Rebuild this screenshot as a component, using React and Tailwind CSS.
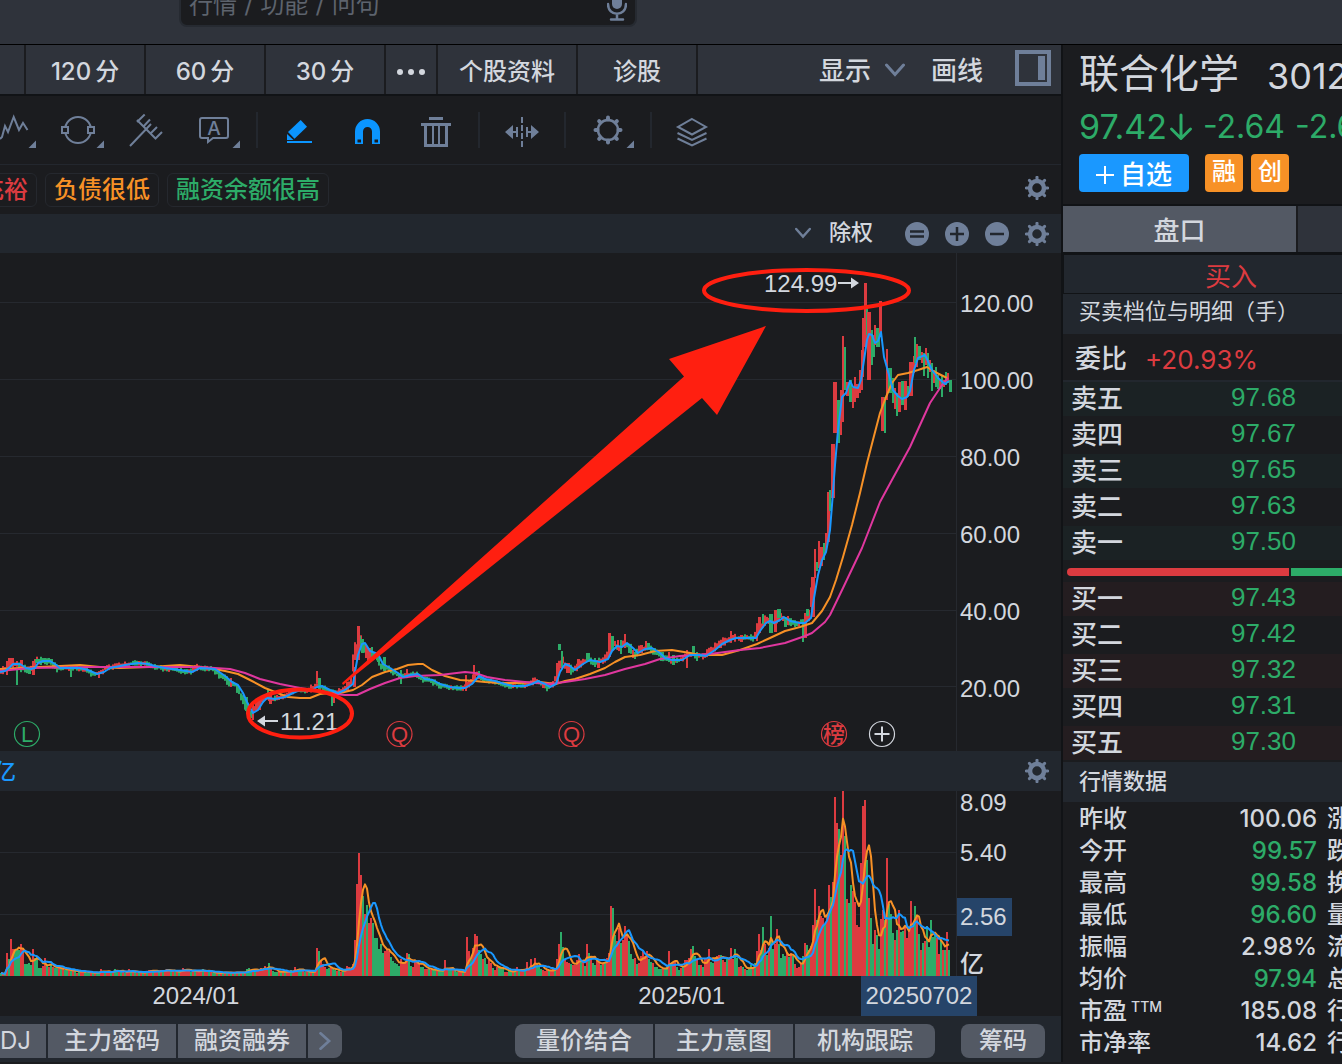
const RED = "#dc3b40";
const GREEN = "#2dab68";
const ORANGE = "#f79126";
const BLUE = "#1a98ff";
const PINK = "#e0379f";
const ICON = "#6f7f99";
const GRID = "#26292f";
const MARK = "#ff1f10";

// moving averages, "x,y" pairs in chart pixels
const MA_FAST = "0,672 5,671 10,667 13,664 20,664 26,668 31,669 35,668 38,663 43,661 50,661 55,664 60,668 80,668 88,670 97,674 104,672 110,668 125,665 138,663 148,664 155,666 165,668 180,670 192,672 200,668 215,669 225,676 232,682 238,685 243,693 247,702 253,713 258,710 263,702 267,698 275,699 285,697 293,693 300,690 310,691 317,687 322,686 330,690 338,693 345,690 353,684 355,672 358,655 362,644 365,643 370,651 378,654 383,664 390,668 398,673 403,677 410,675 418,674 425,679 433,680 440,684 450,687 460,688 465,688 472,684 479,676 485,679 495,681 505,684 512,686 525,686 532,684 538,681 545,684 550,687 556,684 560,672 565,664 570,666 575,670 583,664 590,660 600,662 608,659 612,651 617,646 622,647 627,643 633,648 638,653 645,649 652,648 660,653 665,658 672,660 682,660 690,655 700,655 706,656 715,650 722,644 730,640 736,638 750,638 756,638 760,631 766,623 770,621 774,623 780,620 784,617 790,621 800,623 805,623 811,618 814,598 818,575 822,560 826,552 830,530 832,505 835,465 838,430 842,397 846,393 850,381 853,387 858,388 861,380 864,360 867,340 869,334 872,335 875,343 878,341 881,332 884,357 889,375 893,390 898,396 902,399 907,397 910,391 914,370 918,358 925,355 932,370 938,378 945,384 949,381";
const MA_MID = "0,669 40,667 80,665 100,667 120,668 150,667 180,665 200,667 215,669 225,671 238,674 250,680 265,688 275,692 288,697 300,698 310,698 320,694 330,693 340,693 353,690 362,685 372,677 385,672 397,669 408,665 418,664 423,664 432,670 445,676 460,680 475,681 485,682 500,683 520,683 540,682 556,684 565,681 575,679 590,674 605,668 615,662 625,657 640,655 655,651 672,650 690,653 700,655 722,655 740,650 757,644 770,638 785,631 800,627 812,623 822,611 830,597 836,580 843,557 852,525 860,493 867,463 874,436 880,413 886,397 892,383 898,375 908,373 918,370 927,367 935,372 947,378";
const MA_SLOW = "0,671 30,668 90,667 150,667 200,667 230,669 245,673 260,679 280,684 300,688 320,691 335,694 345,695 357,695 370,689 385,683 400,678 415,676 440,675 465,672 475,673 487,677 505,680 525,682 550,684 565,682 585,679 605,675 625,669 645,664 660,659 680,656 710,654 740,650 760,648 785,643 805,636 812,633 825,622 830,615 843,588 862,548 880,502 893,478 910,447 930,403 942,385 948,378";

// [x, high, low, up?, width]
const BIG_CANDLES = [
  [6, 661, 675, 1, 2], [8, 658, 664, 1, 6], [16, 668, 685, 0, 2], [20, 660, 667, 1, 3], [28, 669, 674, 0, 3], [32, 661, 675, 1, 3],
  [35, 659, 663, 0, 18], [70, 667, 677, 0, 2], [98, 673, 678, 1, 2], [230, 678, 687, 1, 2], [245, 697, 711, 0, 3], [252, 705, 720, 1, 2],
  [255, 699, 710, 1, 6], [267, 690, 699, 0, 2], [269, 693, 704, 1, 3], [316, 671, 683, 1, 2], [318, 678, 690, 0, 3], [331, 693, 706, 0, 2],
  [333, 694, 703, 1, 2], [346, 682, 692, 1, 3], [353, 667, 687, 1, 3], [355, 647, 660, 1, 2], [357, 626, 660, 1, 3], [360, 636, 648, 0, 1],
  [361, 639, 653, 0, 3], [365, 645, 658, 1, 2], [367, 648, 661, 1, 4], [371, 647, 657, 0, 2], [377, 653, 662, 0, 3], [383, 657, 671, 0, 3],
  [400, 670, 684, 0, 2], [406, 669, 677, 1, 2], [465, 675, 691, 1, 2], [473, 665, 680, 1, 2], [478, 671, 678, 0, 2], [542, 684, 688, 1, 3],
  [556, 663, 683, 1, 3], [558, 644, 650, 0, 3], [561, 651, 667, 0, 2], [566, 663, 673, 1, 4], [577, 659, 668, 1, 3], [586, 653, 662, 0, 4],
  [594, 658, 667, 0, 2], [597, 660, 668, 1, 3], [608, 633, 657, 1, 3], [611, 636, 650, 0, 3], [617, 640, 650, 1, 2], [620, 640, 654, 0, 2],
  [624, 634, 648, 1, 2], [628, 644, 653, 0, 4], [632, 650, 658, 1, 2], [640, 645, 653, 1, 3], [645, 641, 650, 1, 2], [647, 643, 650, 0, 3],
  [660, 652, 661, 0, 4], [668, 652, 659, 1, 2], [672, 655, 665, 0, 3], [686, 657, 668, 1, 2], [692, 646, 653, 0, 3], [696, 652, 661, 0, 2],
  [719, 641, 648, 1, 3], [730, 631, 640, 1, 2], [740, 635, 642, 1, 3], [756, 629, 641, 1, 2], [758, 617, 633, 1, 3], [762, 614, 624, 0, 2],
  [769, 614, 633, 0, 4], [774, 610, 632, 1, 3], [777, 609, 618, 0, 4], [784, 617, 627, 0, 3], [787, 616, 625, 1, 2], [802, 620, 642, 0, 2],
  [804, 613, 638, 1, 3], [806, 609, 616, 0, 3], [811, 577, 617, 1, 4], [814, 549, 578, 1, 2], [816, 562, 571, 0, 2], [818, 541, 568, 1, 2],
  [820, 547, 566, 1, 3], [823, 543, 560, 0, 2], [825, 533, 552, 1, 2], [827, 492, 542, 1, 3], [829, 490, 511, 0, 2], [831, 444, 498, 1, 4],
  [833, 382, 433, 1, 4], [837, 400, 443, 0, 3], [840, 390, 435, 1, 2], [842, 336, 422, 1, 2], [844, 347, 390, 0, 2], [846, 382, 396, 1, 3],
  [849, 380, 402, 0, 3], [852, 388, 408, 1, 2], [854, 377, 402, 1, 2], [856, 384, 398, 1, 3], [859, 370, 393, 1, 2], [861, 350, 390, 1, 2],
  [862, 318, 377, 1, 2], [864, 283, 347, 1, 3], [866, 308, 335, 0, 2], [867, 312, 380, 1, 4], [871, 330, 365, 0, 2], [873, 335, 357, 0, 2],
  [874, 325, 345, 1, 2], [876, 328, 347, 0, 4], [879, 301, 333, 1, 3], [881, 397, 431, 1, 3], [884, 397, 433, 0, 2], [886, 349, 400, 1, 2],
  [888, 368, 393, 0, 4], [892, 378, 403, 0, 2], [894, 388, 409, 1, 2], [896, 393, 416, 0, 2], [898, 382, 412, 1, 3], [901, 381, 405, 0, 3],
  [904, 381, 410, 1, 3], [907, 386, 397, 0, 2], [909, 362, 396, 1, 4], [913, 356, 373, 1, 2], [914, 337, 363, 0, 2], [916, 344, 367, 1, 2],
  [918, 346, 360, 0, 3], [921, 352, 363, 1, 2], [923, 353, 376, 0, 2], [925, 348, 365, 1, 2], [927, 353, 378, 0, 2], [929, 360, 372, 1, 2],
  [931, 363, 391, 0, 2], [933, 370, 383, 1, 2], [935, 367, 387, 0, 2], [937, 375, 389, 0, 2], [939, 380, 389, 1, 2], [941, 375, 397, 0, 2],
  [943, 380, 387, 1, 2], [945, 372, 385, 0, 2], [947, 373, 383, 1, 2], [949, 380, 392, 0, 3],
];

// daily volume, one bar every 2px; negative = down day
const VOLUME = [
  -3, 2, -2, 23, -17, 37, 27, -26, -26, -26, 32, 27, -12, -12, -13, -11, 27, -18, -20, -8, -8, 10, 18, -10, 9,
  -11, 9, -8, -8, 8, -7, 7, -6, -6, 6, -5, 6, -5, 3, -5, 4, 5, -4, -3, -4, 3, -3, 3, -3, -4,
  7, 5, -4, 3, 5, -4, 4, -7, -6, 4, -4, 5, -3, 4, 7, -4, 5, -4, 3, -4, 3, -3, 4, -5, 6,
  6, -5, 4, 5, -4, 6, -6, 5, 7, 6, -5, 5, -4, 4, -5, 5, 8, 7, 6, 5, -4, 5, -6, 5, 4,
  5, -7, 5, 4, -5, 4, -3, -3, 3, -3, 3, -4, 4, -3, 3, -3, 3, -4, 4, -3, 3, -4, 4, -7, -8,
  -6, 6, -5, 7, 6, 8, 7, 10, 6, -13, 7, -5, -4, -4, 4, -4, 5, -4, 4, 4, -6, 4, 9, 6, -7,
  -6, 5, -4, 4, -4, 4, -4, 5, 28, -25, 15, 12, 9, -7, -8, 8, -7, -6, 5, -6, 4, -5, 6, 10, 9,
  8, 12, 36, 92, 123, 101, -80, 62, -71, 53, 58, -53, -38, -38, -27, -32, -23, 25, 27, 25, -19, -15, -13, -12, -10,
  17, 13, 14, 23, -22, -10, 9, 15, 15, 13, -9, -9, 7, 7, -7, 6, -6, -6, 5, -5, -5, -5, 16, 6, -6,
  -6, 6, -5, -4, 4, 4, -4, 4, 39, 25, -18, 28, 42, 40, -26, -22, 17, -18, -12, 16, 13, -8, 6, 9, -9,
  -9, -7, 4, 4, -5, -5, 5, -5, 9, -6, 5, 5, -6, 14, 6, 17, 8, 18, -11, -9, -7, 6, 5, 6, -5,
  5, 7, -7, 17, 32, -44, -29, 16, 14, 13, -12, 11, 11, 16, 22, -14, 14, -10, 32, -23, 17, -13, -11, 15, 14,
  -11, 13, -14, 18, 23, 70, -68, -41, 35, 48, -33, 36, 50, 42, -35, -22, -17, 18, -12, 13, 20, 25, 20, 25, -17,
  -14, 13, -9, -9, -7, -7, 7, -8, -9, 25, -13, 14, 14, -9, -6, 8, -10, 16, 16, 18, 27, -30, -20, 17, -11,
  11, -9, 17, 18, 27, -14, -13, 17, 20, 21, -21, 16, 14, -18, 18, 28, 17, -27, -18, 9, 10, -9, 7, -6, -7,
  -11, 9, -13, 25, 42, -26, -49, 32, -21, 28, -60, -27, 32, 47, -32, -18, -22, -20, 24, -19, 23, -20, 12, 8, 9,
  13, -20, 33, -31, -26, 30, 51, 87, -56, 70, 60, 58, -52, 62, 91, -79, 94, 179, 153, -147, 121, 186, -140, 77, -73,
  -91, 85, 74, 51, 49, 113, 170, 176, -116, 78, -58, -32, 46, -41, -27, 57, 66, -56, 118, -72, -62, -43, 36, -46, 66,
  -44, -45, 50, 38, 48, 75, 50, -70, 60, -42, 26, -33, 35, -50, -29, -56, -39, -43, 38, 22, -36, 26, -26, 44, -26,
];

const FAST_POINTS = MA_FAST.split(" ").map(p => p.split(",").map(Number));

function priceAt(x) {
  const i = FAST_POINTS.findIndex(p => p[0] >= x);
  if (i <= 0) return FAST_POINTS[0][1];
  const [x0, y0] = FAST_POINTS[i - 1];
  const [x1, y1] = FAST_POINTS[i];
  return y0 + ((y1 - y0) * (x - x0)) / (x1 - x0);
}

const wobble = (n) => Math.abs((Math.sin(n * 12.9898) * 43758.5453) % 1);

const SMALL_CANDLES = Array.from({ length: 406 }, (_, i) => {
  const x = i * 2;
  const slope = priceAt(x + 4) - priceAt(x);
  const mid = priceAt(x + 3) + slope * 0.4;
  const size = (x > 560 || x < 50 ? 3 : 2) + Math.abs(slope) * 0.5;
  const up = slope + (wobble(i + 7) - 0.5) * 3 < 0;
  return [x, mid - 1 - wobble(i) * size, mid + 1 + wobble(i + 99) * size, up, 2];
});

function average(days) {
  return VOLUME.map((_, i) => {
    const part = VOLUME.slice(Math.max(0, i - days + 1), i + 1);
    const mean = part.reduce((sum, v) => sum + Math.abs(v), 0) / part.length;
    return `${i * 2 + 1},${185 - mean}`;
  }).join(" ");
}

function Chevron({ className = "", size = 20 }) {
  return (
    <svg width={size} height={size} viewBox="0 0 20 20" className={className} fill="none" stroke={ICON} strokeWidth="3" strokeLinecap="round">
      <path d="M1.5 5 10 14.5 18.5 5" />
    </svg>
  );
}

function Gear() {
  return (
    <svg width="24" height="24" viewBox="-12 -12 24 24" fill="none" stroke={ICON}>
      <circle r="7" strokeWidth="4.5" />
      {[0, 45, 90, 135, 180, 225, 270, 315].map(a => (
        <path key={a} d="M0-8V-10.8" strokeWidth="3" strokeLinecap="round" transform={`rotate(${a})`} />
      ))}
    </svg>
  );
}

function RoundIcon({ d }) {
  return (
    <svg width="24" height="24" viewBox="0 0 24 24">
      <circle cx="12" cy="12" r="12" fill={ICON} />
      <path d={d} stroke="#22272e" strokeWidth="2.5" />
    </svg>
  );
}

function Tool({ label, more, children }) {
  return (
    <button aria-label={label} className="w-[68px] shrink-0">
      <svg width="68" height="68" viewBox="0 0 68 68" fill="none" stroke={ICON} strokeWidth="2">
        {children}
        {more && <path d="M60 44.5V52H52.5Z" fill={ICON} stroke="none" />}
      </svg>
    </button>
  );
}

const Divider = () => <div className="mx-2 h-9 w-0.5 shrink-0 bg-[#23272e]" />;

function Toolbar() {
  return (
    <div className="-ml-6 flex h-[68px] items-center">
      <Tool label="波浪" more>
        <path d="M24 43 26 41 29 30 32 36 37.700 21 43 34 47 27 51.500 34" />
      </Tool>
      <Tool label="图形" more>
        <circle cx="34" cy="34" r="13" />
        <rect x="18" y="31" width="6" height="6" fill="#1b1c1f" />
        <rect x="44" y="31" width="6" height="6" fill="#1b1c1f" />
      </Tool>
      <Tool label="叉线">
        <path d="M18 50 39 28M25 24 44 43M25 26 32.700 18.500M31 31 38 23.500M38 38 45 31M43 43 50 36" />
      </Tool>
      <Tool label="标注" more>
        <path d="M22 22H46a2 2 0 0 1 2 2V40a2 2 0 0 1-2 2H33L28 46V42H22a2 2 0 0 1-2-2V24a2 2 0 0 1 2-2Z" />
        <text x="34" y="39" textAnchor="middle" fill={ICON} stroke="none" className="font-[Inter] text-[19px] font-medium">A</text>
      </Tool>
      <Divider />
      <Tool label="画笔">
        <g fill="#0b95ff" stroke="none">
          <path d="M34.700 24 41 30.700 28.500 42.700 22 36Z" />
          <path d="M21 38 27.500 44H21ZM21 45H46V47H21Z" />
        </g>
      </Tool>
      <Tool label="磁吸">
        <path d="M21 48V35.500a12.500 12.500 0 0 1 25 0V48H38V35.500a4.500 4.500 0 0 0-9 0V48ZM23.500 43.500V46.500H27V43.500ZM40.500 43.500V46.500H44V43.500Z" fill="#0b95ff" fillRule="evenodd" stroke="none" />
      </Tool>
      <Tool label="删除">
        <path d="M27 22.500H41M19 28.500H49" strokeWidth="3" />
        <path d="M23.500 29V49.500H44.500V29" strokeWidth="3" />
        <path d="M31 29V49M37 29V49" />
      </Tool>
      <Divider />
      <Tool label="区间">
        <path d="M34 21V51" strokeDasharray="6 2" />
        <path d="M24 36H29M29 31V41M44 36H39M39 31V41" />
        <path d="M17 36 25 29V43ZM51 36 43 29V43Z" fill={ICON} stroke="none" />
      </Tool>
      <Divider />
      <Tool label="设置" more>
        <circle cx="34" cy="34" r="10" strokeWidth="2.500" />
        {[0, 45, 90, 135, 180, 225, 270, 315].map(a => (
          <path key={a} d="M34 23.500V21.500" strokeWidth="4" strokeLinecap="round" transform={`rotate(${a} 34 34)`} />
        ))}
      </Tool>
      <Divider />
      <Tool label="图层">
        <path d="M32 23 46 31 32 38.500 18 31ZM17.500 37 32 44 46.500 37M17.500 42.500 32 49.500 46.500 42.500" />
      </Tool>
    </div>
  );
}

function EventMark({ x, color, children }) {
  return (
    <g>
      <circle cx={x} cy="734" r="12.500" fill="none" stroke={color} strokeWidth="1.200" />
      <text x={x} y="742" textAnchor="middle" fill={color} className="text-[22px]">{children}</text>
    </g>
  );
}

function PriceChart() {
  return (
    <svg viewBox="0 253 956 498" preserveAspectRatio="xMaxYMid meet" className="h-[498px] w-full min-w-0 flex-1">
      {[302, 379, 456, 533, 610, 686].map(y => <path key={y} d={`M-3000 ${y}.5H956`} stroke={GRID} />)}
      {[...SMALL_CANDLES, ...BIG_CANDLES].map(([x, high, low, up, w], i) => (
        <rect key={i} x={x} y={high} width={w} height={low - high} fill={up ? RED : GREEN} />
      ))}
      <g fill="none" strokeWidth="2" strokeLinejoin="round">
        <polyline points={MA_MID} stroke={ORANGE} />
        <polyline points={MA_SLOW} stroke={PINK} />
        <polyline points={MA_FAST} stroke={BLUE} />
      </g>
      <EventMark x={27} color={GREEN}>L</EventMark>
      <EventMark x={399.5} color={RED}>Q</EventMark>
      <EventMark x={571.5} color={RED}>Q</EventMark>
      <EventMark x={834} color={RED}>榜</EventMark>
      <g fill="none" stroke="#d3d7de">
        <circle cx="882" cy="734" r="12.500" strokeWidth="1.200" />
        <path d="M874.500 734H889.500M882 726.500V741.500" strokeWidth="2" />
      </g>

      <g fill="#d3d7de" stroke="none">
        <text x="764" y="292" className="text-[24px]">124.99</text>
        <path d="M838 282H851V277.500L859 283 851 288.500V284H838Z" />
        <text x="280" y="730" className="text-[24px]">11.21</text>
        <path d="M278 720H265V715.500L257 721 265 726.500V722H278Z" />
      </g>

      {/* hand-drawn highlights */}
      <g fill="none" stroke={MARK} strokeWidth="4">
        <ellipse cx="806.500" cy="290.500" rx="102.500" ry="20.500" />
        <ellipse cx="300" cy="713.500" rx="52" ry="24" />
      </g>
      <path d="M766 326 669 359 684 376.500 342 683 343 685 702 398 717 415Z" fill={MARK} />
    </svg>
  );
}

function VolumeChart() {
  return (
    <svg viewBox="0 0 956 185" preserveAspectRatio="xMaxYMid meet" className="h-[185px] w-full min-w-0 flex-1">
      {[61, 123].map(y => <path key={y} d={`M-3000 ${y}.5H956`} stroke={GRID} />)}
      {VOLUME.map((v, i) => (
        <rect key={i} x={i * 2} y={185 - Math.abs(v)} width="2" height={Math.abs(v)} fill={v > 0 ? RED : GREEN} />
      ))}
      <g fill="none" strokeWidth="2" strokeLinejoin="round">
        <polyline points={average(5)} stroke={ORANGE} />
        <polyline points={average(10)} stroke={BLUE} />
      </g>
    </svg>
  );
}

const periods = ["120", "60", "30"];

function PeriodTabs() {
  return (
    <div className="flex h-[51px] shrink-0 gap-0.5 border-b-2 border-[#111316] text-[24px] *:bg-[#2f333b]">
      <div className="w-6" />
      {periods.map(p => (
        <button key={p} className="flex w-[118px] items-center justify-center gap-1 pt-1">
          <span className="font-[Inter]">{p}</span>分
        </button>
      ))}
      <button aria-label="更多周期" className="flex w-[50px] items-center justify-center gap-[5px] pt-1">
        {[0, 1, 2].map(i => <span key={i} className="size-1.5 rounded-full bg-[#d3d7de]" />)}
      </button>
      <button className="w-[138px] pt-1">个股资料</button>
      <button className="w-[118px] pt-1">诊股</button>
      <div className="flex flex-1 items-center justify-end pr-2.5 text-[26px]">
        <button className="flex items-center gap-3.5 pt-1">显示 <Chevron className="mb-1" /></button>
        <button className="ml-[26px] pt-1">画线</button>
        <button aria-label="侧栏" className="mb-1 ml-8">
          <svg width="36" height="36" viewBox="0 0 36 36">
            <rect x="2" y="2" width="32" height="32" fill="none" stroke={ICON} strokeWidth="4" />
            <rect x="23" y="6" width="7" height="24" fill={ICON} />
          </svg>
        </button>
      </div>
    </div>
  );
}

const tagClass = "shrink-0 rounded-md border border-[#25282e] px-2 leading-8";

function ChartPanel() {
  return (
    <main className="flex min-w-0 flex-1 flex-col">
      <PeriodTabs />
      <Toolbar />
      <div className="flex h-[50px] items-center gap-2 border-t border-[#23272e] pr-3 text-[24px]">
        <div className="flex w-[37px] shrink-0 justify-end overflow-hidden">
          <span className={`${tagClass} text-[#dc3b40]`}>充裕</span>
        </div>
        <span className={`${tagClass} text-[#f79126]`}>负债很低</span>
        <span className={`${tagClass} text-[#2dab68]`}>融资余额很高</span>
        <button aria-label="标签设置" className="mb-1 ml-auto"><Gear /></button>
      </div>
      <div className="flex h-[39px] items-center justify-end gap-4 bg-[#22272e] pr-3 text-[22px]">
        <button className="mr-4 flex items-center gap-[18px] pb-0.5"><Chevron size={16} />除权</button>
        <button aria-label="重置"><RoundIcon d="M5 9.500H19M5 14.500H19" /></button>
        <button aria-label="放大"><RoundIcon d="M5 12H19M12 5V19" /></button>
        <button aria-label="缩小"><RoundIcon d="M5 12H19" /></button>
        <button aria-label="主图设置"><Gear /></button>
      </div>

      <div className="flex">
        <PriceChart />
        <div className="w-[105px] shrink-0 border-l border-[#26292f] pt-3 pl-[3px] text-[24px]">
          {["120.00", "100.00", "80.00", "60.00", "40.00", "20.00"].map(v => (
            <div key={v} className="flex h-[77px] items-center">{v}</div>
          ))}
        </div>
      </div>

      <div className="flex h-10 items-center justify-between bg-[#22272e] pr-3 text-[22px] text-[#1a98ff]">
        <span className="flex w-4 justify-end overflow-hidden">亿</span>
        <button aria-label="副图设置"><Gear /></button>
      </div>

      <div className="flex">
        <VolumeChart />
        <div className="w-[105px] shrink-0 border-l border-[#26292f] text-[24px] leading-6">
          <div className="pl-[3px]">8.09</div>
          <div className="mt-[26px] pl-[3px]">5.40</div>
          <div className="mt-[33px] w-[55px] bg-[#264469] pl-[3px] leading-[38px]">2.56</div>
          <div className="mt-4 pl-[3px]">亿</div>
        </div>
      </div>

      <div className="flex h-10 items-center justify-end pr-[84px] text-[24px]">
        <span>2024/01</span>
        <span className="ml-[399px]">2025/01</span>
        <span className="ml-[136px] w-[116px] bg-[#264469] text-center leading-10">20250702</span>
      </div>

      <div className="flex h-[46px] items-start gap-0.5 bg-[#22272e] pt-2 pr-4 text-[24px] *:h-[34px] *:shrink-0 *:bg-[#535964] *:leading-[34px]">
        <button className="w-[46px] pr-4 text-right font-[Inter] font-normal">DJ</button>
        <button className="w-32">主力密码</button>
        <button className="w-32">融资融券</button>
        <button aria-label="更多指标" className="flex w-[34px] items-center justify-center rounded-r-lg">
          <Chevron size={18} className="-rotate-90" />
        </button>
        <button className="ml-auto w-[138px] rounded-l-lg">量价结合</button>
        <button className="w-[138px]">主力意图</button>
        <button className="w-[140px] rounded-r-lg">机构跟踪</button>
        <button className="ml-6 w-[84px] rounded-lg">筹码</button>
      </div>
    </main>
  );
}

const asks = [["卖五", "97.68"], ["卖四", "97.67"], ["卖三", "97.65"], ["卖二", "97.63"], ["卖一", "97.50"]];
const bids = [["买一", "97.43"], ["买二", "97.42"], ["买三", "97.32"], ["买四", "97.31"], ["买五", "97.30"]];

function Levels({ rows, tone }) {
  return (
    <table className="w-full border-collapse text-[26px] leading-[30px]">
      <tbody>
        {rows.map(([name, price]) => (
          <tr key={name} className={`border-b-2 border-[#1b1c1f] ${tone}`}>
            <th className="p-0 pl-2 text-left font-medium">{name}</th>
            <td className="p-0 pr-[46px] pb-1 text-right text-[#2dab68]">{price}</td>
          </tr>
        ))}
      </tbody>
    </table>
  );
}

const quotes = [
  ["昨收", "100.06", false, "涨"],
  ["今开", "99.57", true, "跌"],
  ["最高", "99.58", true, "换"],
  ["最低", "96.60", true, "量"],
  ["振幅", "2.98%", false, "流"],
  ["均价", "97.94", true, "总"],
  ["市盈", "185.08", false, "行"],
  ["市净率", "14.62", false, "行"],
];

function QuotePanel() {
  return (
    <aside className="w-[281px] shrink-0 overflow-hidden border-l-2 border-[#111316] whitespace-nowrap">
      <div className="h-[159px] pt-1 pl-4">
        <h1 className="flex h-[50px] items-center gap-7 text-[40px] font-normal">
          联合化学 <span className="pt-1 font-[Inter] text-[36px]">301209</span>
        </h1>
        <div className="flex h-[55px] items-center font-[Inter] text-[32px] font-normal text-[#2dab68]">
          <span className="text-[34px]">97.42</span>
          <svg width="24" height="28" viewBox="0 0 24 28" className="ml-0.5 shrink-0" fill="none" stroke="currentColor" strokeWidth="3" strokeLinecap="round" strokeLinejoin="round">
            <path d="M12 2V25M2.500 16 12 25.500 21.500 16" />
          </svg>
          <span className="ml-2.5">-2.64</span>
          <span className="ml-2.5">-2.64%</span>
        </div>
        <div className="flex h-[38px] text-[24px] text-white *:rounded">
          <button className="flex w-[110px] items-center justify-center gap-1.5 bg-[#1a98ff] pt-1 text-[26px]">
            <svg width="18" height="18" viewBox="0 0 18 18" stroke="currentColor" strokeWidth="2"><path d="M0 9H18M9 0V18" /></svg>
            自选
          </button>
          <span className="ml-4 w-[38px] bg-[#f79126] text-center">融</span>
          <span className="ml-2 w-[38px] bg-[#f79126] text-center">创</span>
        </div>
      </div>

      <div className="flex h-[51px] gap-0.5 border-t-2 border-b-3 border-[#111316] text-[26px]">
        <button className="w-[233px] shrink-0 bg-[#535964] pt-1">盘口</button>
        <div className="flex-1 bg-[#2f333b]" />
      </div>
      <button className="block h-[39px] w-[335px] border-b border-l border-[#111316] bg-[#22272e] pt-1 text-[26px] leading-9 font-normal text-[#dc3b40]">买入</button>
      <h2 className="h-10 bg-[#22272e] pl-4 text-[22px] leading-9 font-normal">买卖档位与明细（手）</h2>
      <div className="flex h-12 items-center gap-[18px] border-b-2 border-[#22272e] pt-1 pl-3 text-[26px]">
        委比 <span className="font-[Inter] font-normal text-[#dc3b40]">+20.93%</span>
      </div>
      <Levels rows={asks} tone="odd:bg-[#1b2224]" />
      <div className="flex h-5 items-center gap-0.5 pl-1">
        <div className="h-2 w-[222px] rounded-l-full bg-[#dc3b40]" />
        <div className="h-2 flex-1 bg-[#2dab68]" />
      </div>
      <Levels rows={bids} tone="odd:bg-[#241d20]" />

      <h2 className="mb-px h-10 bg-[#22272e] pl-4 text-[22px] leading-10">行情数据</h2>
      <table className="ml-4 w-[280px] table-fixed border-collapse text-[24px] leading-8">
        <tbody>
          {quotes.map(([name, value, down, next]) => (
            <tr key={name}>
              <th className="w-[100px] p-0 text-left font-medium">
                {name}{name === "市盈" && <sup className="ml-1 font-[Inter] text-[14px] leading-none">TTM</sup>}
              </th>
              <td className={`w-[138px] p-0 text-right font-[Inter] ${down ? "text-[#2dab68]" : ""}`}>{value}</td>
              <td className="p-0 pl-2.5">{next}</td>
            </tr>
          ))}
        </tbody>
      </table>
    </aside>
  );
}

export default function App() {
  return (
    <div className="min-h-screen overflow-hidden bg-[#1b1c1f] font-['Liberation_Sans','Noto_Sans_CJK_SC',sans-serif] font-medium text-[#d3d7de]">
      <header className="flex h-[45px] items-end overflow-hidden border-b border-black bg-[#2f333b] pb-[17px] pl-[179px]">
        <label className="flex h-11 w-[458px] shrink-0 items-center rounded-lg border-2 border-[#262a31] bg-[#1b1c1f] px-2">
          <input aria-label="搜索" placeholder="行情 / 功能 / 问句" className="min-w-0 flex-1 bg-transparent font-['DejaVu_Sans','Noto_Sans_CJK_SC',sans-serif] text-[24px] font-normal outline-none placeholder:text-[#5d636d]" />
          <svg width="20" height="32" viewBox="0 0 20 32" fill="none" stroke={ICON} strokeWidth="2.500" strokeLinecap="round">
            <rect x="5" y="0" width="10" height="20" rx="5" fill={ICON} stroke="none" />
            <path d="M1 15C1 28 19 28 19 15M10 25V30M4 30.500H16" />
          </svg>
        </label>
      </header>
      <div className="flex">
        <ChartPanel />
        <QuotePanel />
      </div>
    </div>
  );
}
